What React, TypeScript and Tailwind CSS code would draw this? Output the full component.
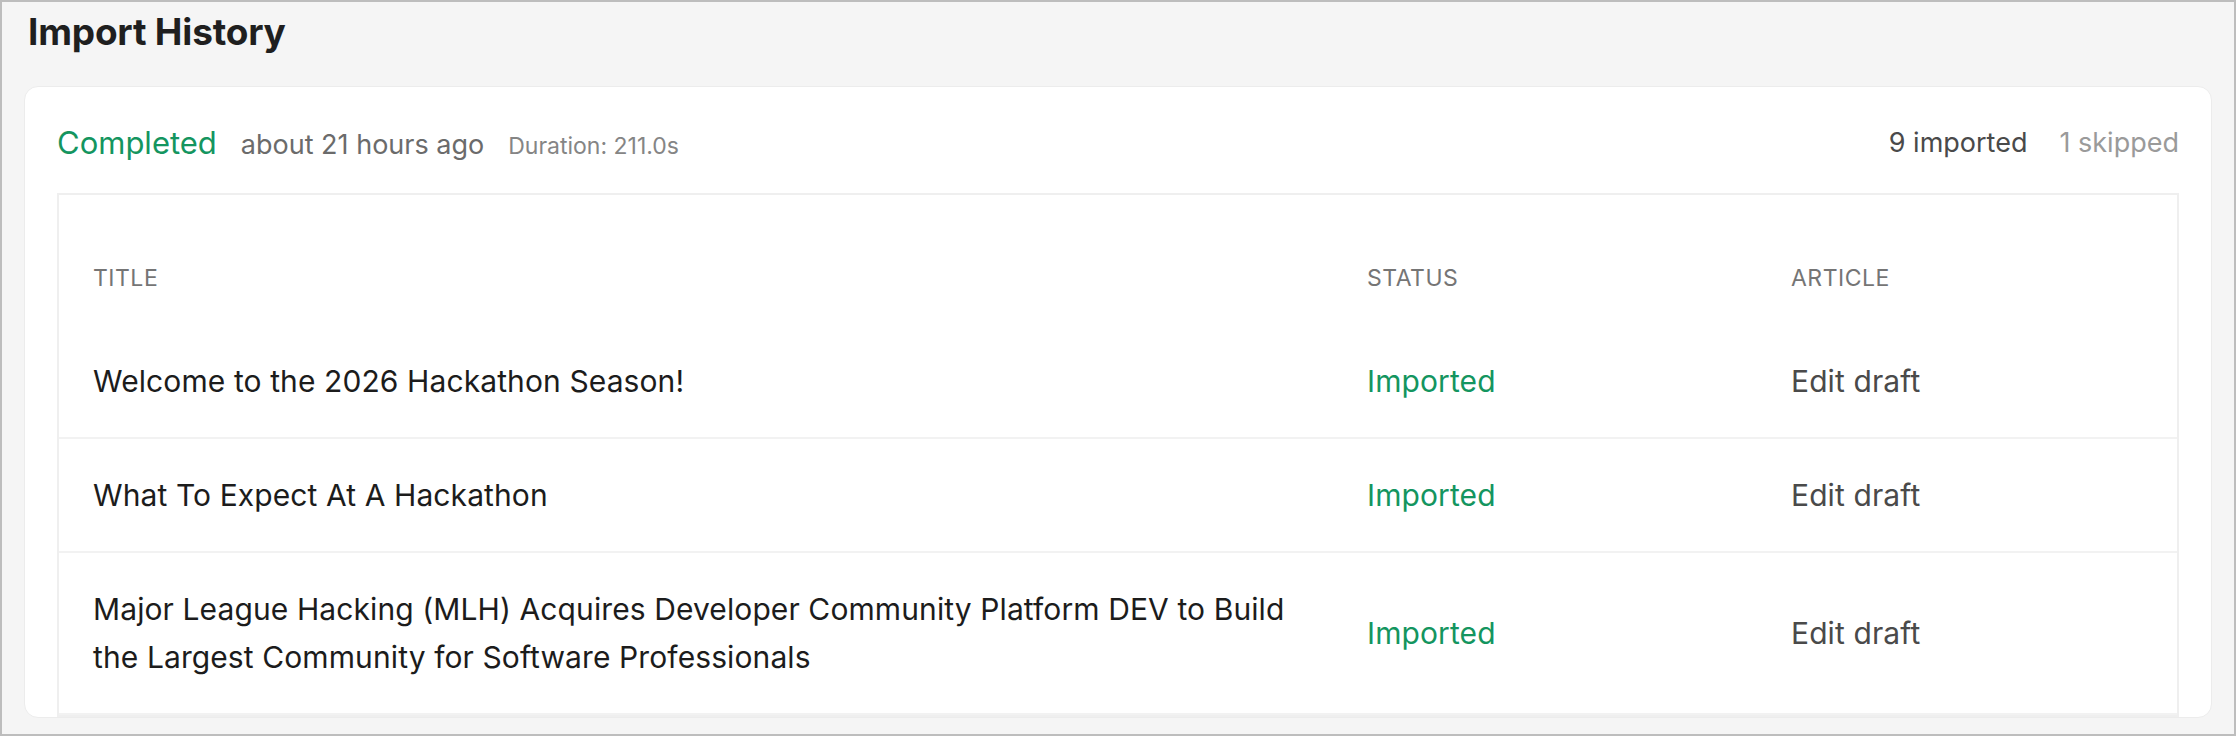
const rows = [
  { title: 'Welcome to the 2026 Hackathon Season!' },
  { title: 'What To Expect At A Hackathon' },
  {
    title:
      'Major League Hacking (MLH) Acquires Developer Community Platform DEV to Build the Largest Community for Software Professionals',
  },
];

export default function App() {
  return (
    <div
      className="h-[736px] w-[2236px] overflow-hidden border-2 border-[#bdbdbd] bg-[#f5f5f5] px-[22px] pt-[10px]"
      style={{ fontFamily: 'Inter, "Noto Sans", sans-serif' }}
    >
      <h1 className="pl-[4px] text-[37px] font-bold leading-[40px] tracking-[-0.2px] text-[#1f1f1f]">Import History</h1>

      <section className="mt-[34px] rounded-[14px] border border-[#ececec] bg-white px-[32px] pt-[36px]">
        <div className="flex h-[40px] items-center justify-between">
          <div className="flex items-baseline gap-[24px]">
            <span className="text-[31px] text-[#14955f]">Completed</span>
            <span className="text-[27px] text-[#6b6b6b]">about 21 hours ago</span>
            <span className="text-[23px] text-[#858585]">Duration: 211.0s</span>
          </div>
          <div className="flex items-baseline gap-[32px] text-[27px]">
            <span className="text-[#4a4a4a]">9 imported</span>
            <span className="text-[#9a9a9a]">1 skipped</span>
          </div>
        </div>

        <div className="mt-[30px] border-2 border-[#efefef] px-[34px]">
          <div className="grid grid-cols-[1274px_424px_1fr] pt-[66px] pb-[32px] text-[23px] uppercase leading-[34px] tracking-[0.5px] text-[#757575]">
            <div>Title</div>
            <div>Status</div>
            <div>Article</div>
          </div>
          {rows.map((r, i) => (
            <div
              key={i}
              className={`-mx-[34px] grid grid-cols-[1274px_424px_1fr] items-center border-b-2 border-[#f2f2f2] px-[34px] py-[32px] text-[30px] leading-[48px] tracking-[0.1px] ${i === 0 ? 'pt-[30px]' : ''}`}
            >
              <div className="pr-[60px] text-[#1c1c1c]">{r.title}</div>
              <div className="text-[#14955f]">Imported</div>
              <div className="text-[#4a4a4a]">Edit draft</div>
            </div>
          ))}
        </div>
      </section>
    </div>
  );
}
